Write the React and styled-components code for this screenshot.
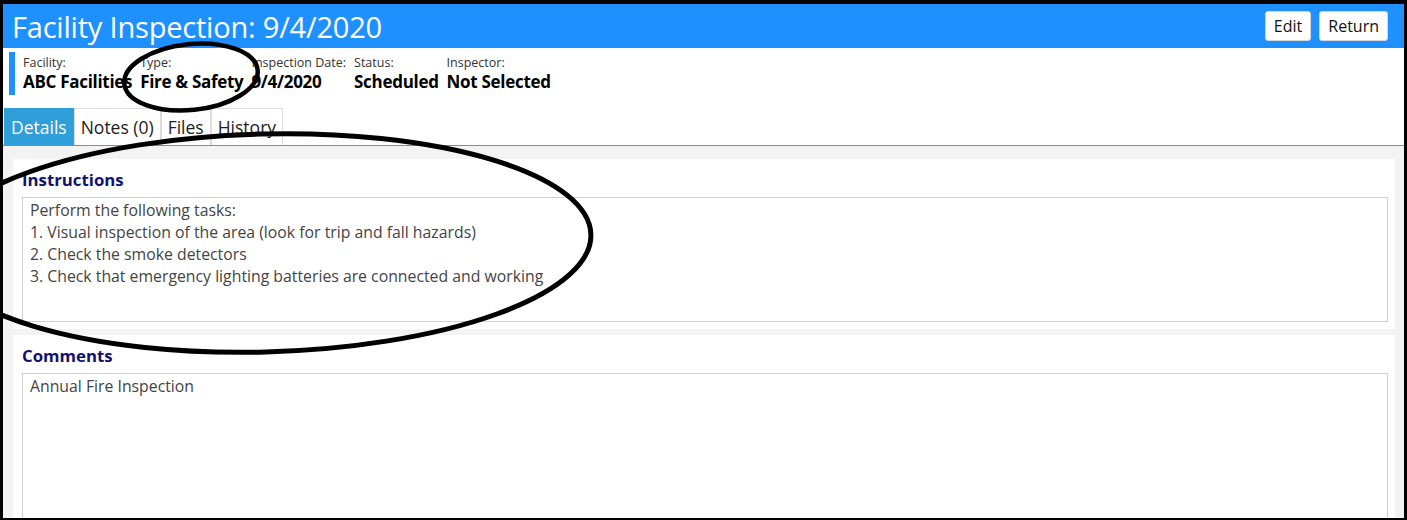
import React from "react";
import styled, { createGlobalStyle } from "styled-components";

const GlobalStyle = createGlobalStyle`
  html, body {
    margin: 0;
    padding: 0;
    background: #fff;
  }
  body {
    font-family: "Open Sans", "Noto Sans", sans-serif;
    color: #222;
  }
  * {
    box-sizing: border-box;
  }
`;

const fields = [
  { label: "Facility:", value: "ABC Facilities" },
  { label: "Type:", value: "Fire & Safety" },
  { label: "Inspection Date:", value: "9/4/2020" },
  { label: "Status:", value: "Scheduled" },
  { label: "Inspector:", value: "Not Selected" },
];

const tabs = ["Details", "Notes (0)", "Files", "History"];

const instructions = [
  "Perform the following tasks:",
  "1. Visual inspection of the area (look for trip and fall hazards)",
  "2. Check the smoke detectors",
  "3. Check that emergency lighting batteries are connected and working",
];

const App = () => {
  return (
    <>
      <GlobalStyle />
      <Frame>
        <Header>
          <Title>Facility Inspection: 9/4/2020</Title>
          <Actions>
            <HeaderButton>Edit</HeaderButton>
            <HeaderButton>Return</HeaderButton>
          </Actions>
        </Header>

        <InfoBar>
          <Accent />
          {fields.map((f) => (
            <Field key={f.label}>
              <FieldLabel>{f.label}</FieldLabel>
              <FieldValue>{f.value}</FieldValue>
            </Field>
          ))}
        </InfoBar>

        <TabStrip>
          {tabs.map((t, i) => (
            <Tab key={t} $active={i === 0}>
              {t}
            </Tab>
          ))}
        </TabStrip>

        <Body>
          <Panel>
            <PanelTitle>Instructions</PanelTitle>
            <TextBox $height={125}>
              {instructions.map((line) => (
                <div key={line}>{line}</div>
              ))}
            </TextBox>
          </Panel>
          <Panel>
            <PanelTitle>Comments</PanelTitle>
            <TextBox $height={180}>Annual Fire Inspection</TextBox>
          </Panel>
        </Body>

        {/* pen marks drawn over the form */}
        <Marks viewBox="0 0 1402 514" width="1402" height="514">
          <ellipse
            cx="188"
            cy="73"
            rx="67"
            ry="33"
            transform="rotate(-6 188 73)"
            fill="none"
            stroke="#000"
            strokeWidth="4.5"
          />
          <ellipse
            cx="260"
            cy="239"
            rx="328"
            ry="109"
            transform="rotate(-1.5 260 239)"
            fill="none"
            stroke="#000"
            strokeWidth="5"
          />
        </Marks>
      </Frame>
    </>
  );
};

export default App;

const Frame = styled.div`
  position: relative;
  width: 1407px;
  height: 520px;
  border-style: solid;
  border-color: #000;
  border-width: 4px 3px 2px 3px;
  overflow: hidden;
  background: #fff;
  display: flex;
  flex-direction: column;
`;

const Header = styled.header`
  height: 44px;
  flex: none;
  background: #1e90ff;
  display: flex;
  align-items: center;
  justify-content: space-between;
  padding: 0 16px 0 9px;
`;

const Title = styled.h1`
  margin: 0;
  font-size: 29px;
  font-weight: 400;
  color: #fff;
  letter-spacing: -0.2px;
`;

const Actions = styled.div`
  display: flex;
  gap: 8px;
`;

const HeaderButton = styled.button`
  height: 30px;
  padding: 0 8px;
  background: #fff;
  border: 1px solid #d6d6d6;
  border-radius: 3px;
  font-family: inherit;
  font-size: 16px;
  color: #111;
`;

const InfoBar = styled.div`
  display: flex;
  align-items: stretch;
  padding: 4px 0 0 6px;
  height: 51px;
  flex: none;
`;

const Accent = styled.div`
  width: 6px;
  height: 43px;
  background: #1e90ff;
  margin-right: 8px;
`;

const Field = styled.div`
  display: flex;
  flex-direction: column;
  padding-right: 8px;
`;

const FieldLabel = styled.span`
  font-size: 12.5px;
  color: #333;
  line-height: 16px;
  margin-top: 3px;
`;

const FieldValue = styled.span`
  font-size: 17px;
  font-weight: 700;
  color: #000;
  line-height: 22px;
  letter-spacing: -0.3px;
`;

const TabStrip = styled.nav`
  display: flex;
  margin-top: 9px;
  padding-left: 1px;
  border-bottom: 1px solid #4f9cc4;
  flex: none;
`;

const Tab = styled.div`
  height: 37px;
  display: flex;
  align-items: center;
  padding: 0 6px;
  font-size: 17.5px;
  border: 1px solid ${(p) => (p.$active ? "#2e9fd8" : "#dcdcdc")};
  border-bottom: none;
  background: ${(p) => (p.$active ? "#2e9fd8" : "#fff")};
  color: ${(p) => (p.$active ? "#fff" : "#222")};
`;

const Body = styled.main`
  flex: 1;
  background: #f3f3f3;
  padding: 13px 9px 0 10px;
  display: flex;
  flex-direction: column;
  gap: 6px;
`;

const Panel = styled.section`
  background: #fff;
  padding: 10px 7px 7px 9px;
`;

const PanelTitle = styled.h2`
  margin: 0 0 6px;
  font-size: 16.8px;
  line-height: 22px;
  font-weight: 700;
  color: #12126e;
`;

const TextBox = styled.div`
  height: ${(p) => p.$height}px;
  border: 1px solid #cfcfcf;
  padding: 1px 7px;
  font-size: 15.8px;
  line-height: 22px;
  color: #444;
`;

const Marks = styled.svg`
  position: absolute;
  left: 0;
  top: 0;
  pointer-events: none;
`;
